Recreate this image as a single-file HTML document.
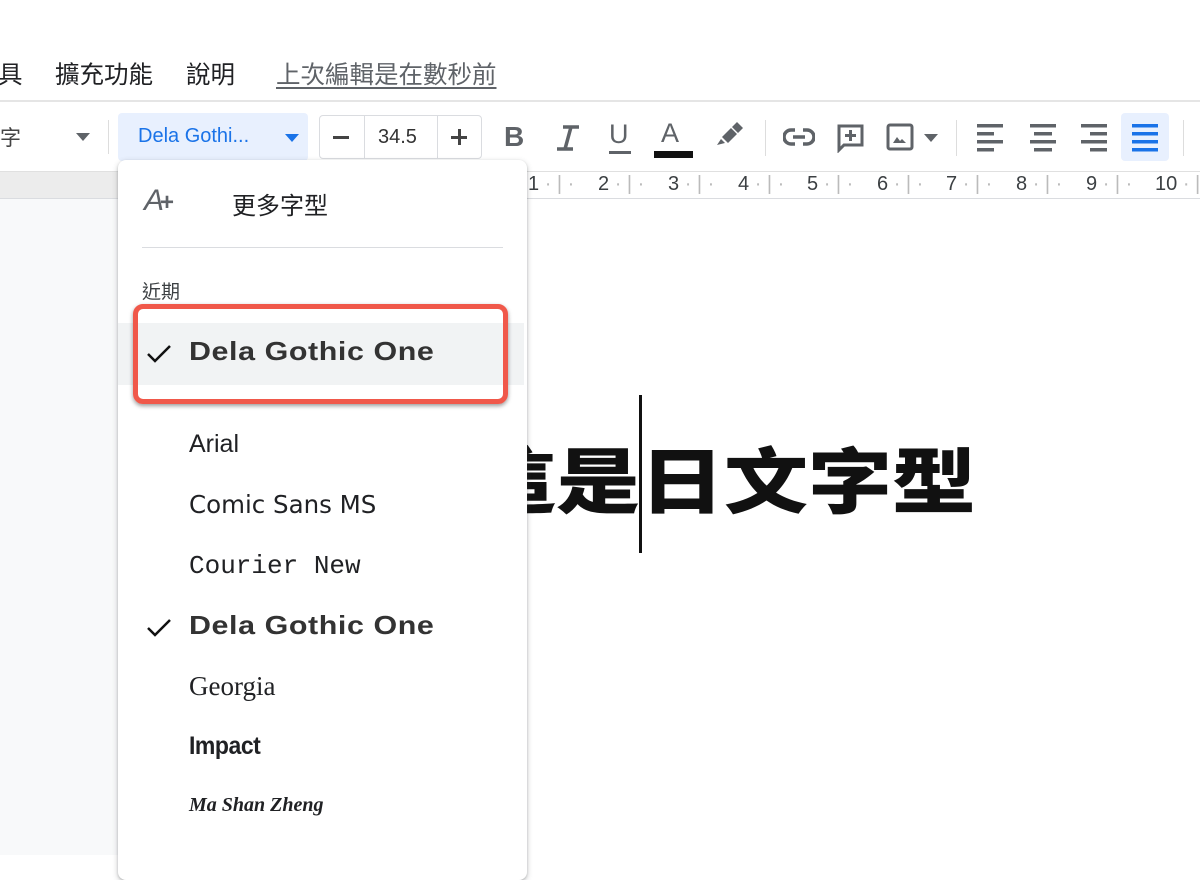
<!DOCTYPE html>
<html><head><meta charset="utf-8"><style>
*{margin:0;padding:0;box-sizing:border-box}
body{width:1200px;height:855px;overflow:hidden;background:#fff;position:relative;font-family:"Liberation Sans","Noto Sans CJK TC",sans-serif;color:#202124}
.abs{position:absolute}
.menu{font-size:24.5px;top:56px;color:#202124}
.ic{fill:#5f6368}
</style></head><body>
<div class="abs menu" style="left:-2px">具</div>
<div class="abs menu" style="left:55px">擴充功能</div>
<div class="abs menu" style="left:186px">說明</div>
<div class="abs menu" style="left:276px;color:#5f6368;text-decoration:underline;text-underline-offset:4px">上次編輯是在數秒前</div>
<div class="abs" style="left:0;top:100px;width:1200px;height:2px;background:#e5e5e5"></div>
<div class="abs" style="left:0;top:122px;font-size:21px;color:#444">字</div>
<svg class="abs" style="left:76px;top:133px" width="14" height="8"><path d="M0 0h14L7 8z" fill="#5f6368"/></svg>
<div class="abs" style="left:108px;top:120px;width:1px;height:34px;background:#ddd"></div>
<div class="abs" style="left:118px;top:113px;width:190px;height:48px;background:#e8f0fe;border-radius:4px"></div>
<div class="abs" style="left:138px;top:125px;font-size:20px;color:#1a73e8">Dela Gothi...</div>
<svg class="abs" style="left:285px;top:134px" width="14" height="8"><path d="M0 0h14L7 8z" fill="#1a73e8"/></svg>
<div class="abs" style="left:319px;top:115px;width:163px;height:44px;border:1px solid #dadce0;border-radius:4px"></div>
<div class="abs" style="left:364px;top:115px;width:1px;height:44px;background:#dadce0"></div>
<div class="abs" style="left:437px;top:115px;width:1px;height:44px;background:#dadce0"></div>
<div class="abs" style="left:333px;top:136px;width:16px;height:3px;background:#444"></div>
<div class="abs" style="left:378px;top:126px;font-size:20px;color:#333">34.5</div>
<div class="abs" style="left:451px;top:136px;width:16px;height:3px;background:#444"></div>
<div class="abs" style="left:458px;top:129px;width:3px;height:16px;background:#444"></div>
<div class="abs" style="left:504px;top:121px;font-size:28px;font-weight:bold;color:#5f6368">B</div>
<svg class="abs" style="left:555px;top:125px" width="26" height="26"><path d="M8 2h16M2 24h16M16 2L10 24" stroke="#5f6368" stroke-width="3.5" fill="none"/></svg>
<div class="abs" style="left:609px;top:119px;font-size:27px;color:#5f6368">U</div>
<div class="abs" style="left:609px;top:151px;width:22px;height:3px;background:#5f6368"></div>
<div class="abs" style="left:661px;top:118px;font-size:27px;color:#5f6368">A</div>
<div class="abs" style="left:654px;top:151px;width:39px;height:7px;background:#111"></div>
<svg class="abs" style="left:715px;top:121px" width="28" height="26"><path d="M2 24l4-6 4 4zM7 16l9-9 6 6-9 9zM17 6l5-5 6 6-5 5z" class="ic"/></svg>
<div class="abs" style="left:765px;top:120px;width:1px;height:36px;background:#ddd"></div>
<svg class="abs" style="left:783px;top:127px" width="32" height="20"><path d="M12 3H8a7 7 0 000 14h4M20 3h4a7 7 0 010 14h-4M10 10h12" stroke="#5f6368" stroke-width="3.5" fill="none"/></svg>
<svg class="abs" style="left:836px;top:123px" width="30" height="30"><path d="M3 3h23v19H8l-5 5z" stroke="#5f6368" stroke-width="3" fill="none"/><path d="M14.5 7v11M9 12.5h11" stroke="#5f6368" stroke-width="3"/></svg>
<svg class="abs" style="left:886px;top:123px" width="30" height="28"><rect x="2" y="2" width="24" height="24" rx="2" stroke="#5f6368" stroke-width="3" fill="none"/><path d="M7 20l4-6 3 4 2-2 4 4z" class="ic"/></svg>
<svg class="abs" style="left:924px;top:134px" width="14" height="8"><path d="M0 0h14L7 8z" fill="#5f6368"/></svg>
<div class="abs" style="left:956px;top:120px;width:1px;height:36px;background:#ddd"></div>
<svg class="abs" style="left:977px;top:124px" width="26" height="28"><rect width="26" height="3.5" fill="#5f6368"/><rect y="8" width="17" height="3.5" fill="#5f6368"/><rect y="16" width="26" height="3.5" fill="#5f6368"/><rect y="24" width="17" height="3.5" fill="#5f6368"/></svg>
<svg class="abs" style="left:1030px;top:124px" width="26" height="28"><rect width="26" height="3.5" fill="#5f6368"/><rect x="4" y="8" width="18" height="3.5" fill="#5f6368"/><rect y="16" width="26" height="3.5" fill="#5f6368"/><rect x="4" y="24" width="18" height="3.5" fill="#5f6368"/></svg>
<svg class="abs" style="left:1081px;top:124px" width="26" height="28"><rect width="26" height="3.5" fill="#5f6368"/><rect x="9" y="8" width="17" height="3.5" fill="#5f6368"/><rect y="16" width="26" height="3.5" fill="#5f6368"/><rect x="9" y="24" width="17" height="3.5" fill="#5f6368"/></svg>
<div class="abs" style="left:1121px;top:113px;width:48px;height:48px;background:#e8f0fe;border-radius:4px"></div>
<svg class="abs" style="left:1132px;top:124px" width="26" height="28"><rect width="26" height="3.5" fill="#1a73e8"/><rect y="8" width="26" height="3.5" fill="#1a73e8"/><rect y="16" width="26" height="3.5" fill="#1a73e8"/><rect y="24" width="26" height="3.5" fill="#1a73e8"/></svg>
<div class="abs" style="left:1183px;top:120px;width:1px;height:36px;background:#ddd"></div>
<div class="abs" style="left:0;top:171px;width:1200px;height:1px;background:#e0e0e0"></div>
<div class="abs" style="left:0;top:172px;width:527px;height:26px;background:#ececec"></div>
<div class="abs" style="left:0;top:198px;width:1200px;height:1px;background:#dadce0"></div>
<div class="abs" style="left:0;top:199px;width:527px;height:656px;background:#f8f9fa"></div>
<div class="abs" style="left:528px;top:173px;font-size:20px;color:#3c4043;white-space:nowrap">
<span style="display:inline-block;width:70px">1 <span style="color:#bbb">·&nbsp;|&nbsp;·</span></span><span style="display:inline-block;width:70px">2 <span style="color:#bbb">·&nbsp;|&nbsp;·</span></span><span style="display:inline-block;width:70px">3 <span style="color:#bbb">·&nbsp;|&nbsp;·</span></span><span style="display:inline-block;width:69px">4 <span style="color:#bbb">·&nbsp;|&nbsp;·</span></span><span style="display:inline-block;width:70px">5 <span style="color:#bbb">·&nbsp;|&nbsp;·</span></span><span style="display:inline-block;width:69px">6 <span style="color:#bbb">·&nbsp;|&nbsp;·</span></span><span style="display:inline-block;width:70px">7 <span style="color:#bbb">·&nbsp;|&nbsp;·</span></span><span style="display:inline-block;width:70px">8 <span style="color:#bbb">·&nbsp;|&nbsp;·</span></span><span style="display:inline-block;width:69px">9 <span style="color:#bbb">·&nbsp;|&nbsp;·</span></span><span>10 <span style="color:#bbb">·&nbsp;|</span></span></div>
<div class="abs" style="left:472px;top:420px;font-size:84px;line-height:110px;font-weight:900;color:#111;font-family:'Noto Sans CJK TC',sans-serif;white-space:nowrap;transform:scaleY(0.85);transform-origin:0 72px">這是日文字型</div>
<div class="abs" style="left:639px;top:395px;width:3px;height:158px;background:#111"></div>
<div class="abs" style="left:118px;top:160px;width:409px;height:720px;background:#fff;border-radius:8px;box-shadow:0 2px 6px rgba(60,64,67,.3),0 1px 2px rgba(60,64,67,.2)"></div>
<div class="abs" style="left:144px;top:184px;font-size:30px;color:#5f6368;font-style:italic;letter-spacing:-4px">A<span style="font-style:normal;font-size:24px;font-weight:bold">+</span></div>
<div class="abs" style="left:232px;top:186px;font-size:24px;color:#202124">更多字型</div>
<div class="abs" style="left:142px;top:247px;width:361px;height:1px;background:#dadce0"></div>
<div class="abs" style="left:142px;top:277px;font-size:19px;color:#3c4043">近期</div>
<div class="abs" style="left:118px;top:323px;width:406px;height:62px;background:#f1f3f4"></div>
<div class="abs" style="left:133px;top:304px;width:375px;height:100px;border:5px solid #f0584a;border-radius:10px;box-shadow:0 2px 4px rgba(0,0,0,.4)"></div>
<svg class="abs" style="left:146px;top:343px" width="26" height="22"><path d="M2 11l7 7L24 3" stroke="#111" stroke-width="2.5" fill="none"/></svg>
<div class="abs" style="left:189px;top:336px;font-size:26px;font-weight:900;color:#333;letter-spacing:0.5px;transform:scaleX(1.17);transform-origin:left">Dela Gothic One</div>
<div class="abs" style="left:189px;top:430px;font-size:25px;color:#202124">Arial</div>
<div class="abs" style="left:189px;top:490px;font-size:24.5px;color:#202124;font-family:'Comic Sans MS','DejaVu Sans',sans-serif">Comic Sans MS</div>
<div class="abs" style="left:189px;top:551px;font-size:26px;color:#202124;font-family:'Liberation Mono',monospace">Courier New</div>
<svg class="abs" style="left:146px;top:617px" width="26" height="22"><path d="M2 11l7 7L24 3" stroke="#111" stroke-width="2.5" fill="none"/></svg>
<div class="abs" style="left:189px;top:610px;font-size:26px;font-weight:900;color:#333;letter-spacing:0.5px;transform:scaleX(1.17);transform-origin:left">Dela Gothic One</div>
<div class="abs" style="left:189px;top:671px;font-size:27px;color:#202124;font-family:'Liberation Serif',serif">Georgia</div>
<div class="abs" style="left:189px;top:732px;font-size:25px;color:#202124;font-weight:bold;transform:scaleX(0.92);transform-origin:left;letter-spacing:-0.5px">Impact</div>
<div class="abs" style="left:189px;top:794px;font-size:20px;color:#202124;font-style:italic;font-weight:bold;font-family:'Liberation Serif',serif">Ma Shan Zheng</div>
</body></html>
